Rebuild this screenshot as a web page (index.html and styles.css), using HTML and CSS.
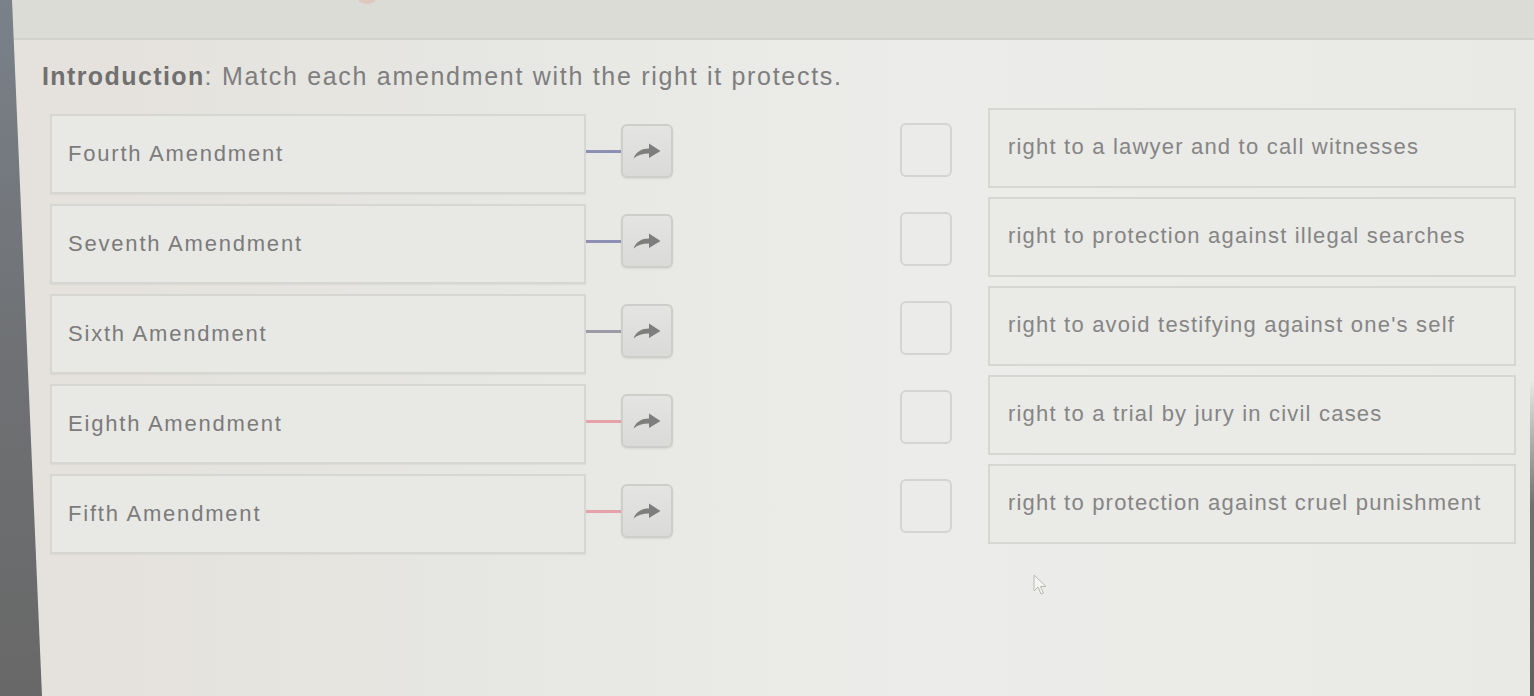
FILE: index.html
```html
<!DOCTYPE html>
<html lang="en">
<head>
  <meta charset="UTF-8">
  <meta name="viewport" content="width=device-width, initial-scale=1.0">
  <title>Amendments Matching</title>
  <link rel="stylesheet" href="styles.css">
</head>
<body>
  <div class="bezel"></div>
  <div class="bezel-right"></div>
  <div class="screen">
    <div class="topbar"><span class="dot"></span></div>
    <h1 class="intro"><b>Introduction</b>: Match each amendment with the right it protects.</h1>

    <div class="board">
      <div class="terms">
        <div class="pair">
          <div class="term">Fourth Amendment</div>
          <div class="link blue"></div>
          <button class="send">
            <svg viewBox="0 0 30 18" width="30" height="18"><path d="M1.5 16.5 C4 9.5 10 6.5 17 6.5 L17 1.5 L28.5 9 L17 16 L17 11.5 C10.5 11.5 5.5 13 1.5 16.5 Z"/></svg>
          </button>
        </div>
        <div class="pair">
          <div class="term">Seventh Amendment</div>
          <div class="link blue"></div>
          <button class="send">
            <svg viewBox="0 0 30 18" width="30" height="18"><path d="M1.5 16.5 C4 9.5 10 6.5 17 6.5 L17 1.5 L28.5 9 L17 16 L17 11.5 C10.5 11.5 5.5 13 1.5 16.5 Z"/></svg>
          </button>
        </div>
        <div class="pair">
          <div class="term">Sixth Amendment</div>
          <div class="link grey"></div>
          <button class="send">
            <svg viewBox="0 0 30 18" width="30" height="18"><path d="M1.5 16.5 C4 9.5 10 6.5 17 6.5 L17 1.5 L28.5 9 L17 16 L17 11.5 C10.5 11.5 5.5 13 1.5 16.5 Z"/></svg>
          </button>
        </div>
        <div class="pair">
          <div class="term">Eighth Amendment</div>
          <div class="link red"></div>
          <button class="send">
            <svg viewBox="0 0 30 18" width="30" height="18"><path d="M1.5 16.5 C4 9.5 10 6.5 17 6.5 L17 1.5 L28.5 9 L17 16 L17 11.5 C10.5 11.5 5.5 13 1.5 16.5 Z"/></svg>
          </button>
        </div>
        <div class="pair">
          <div class="term">Fifth Amendment</div>
          <div class="link red"></div>
          <button class="send">
            <svg viewBox="0 0 30 18" width="30" height="18"><path d="M1.5 16.5 C4 9.5 10 6.5 17 6.5 L17 1.5 L28.5 9 L17 16 L17 11.5 C10.5 11.5 5.5 13 1.5 16.5 Z"/></svg>
          </button>
        </div>
      </div>

      <div class="answers">
        <div class="slot">
          <div class="check"></div>
          <div class="answer">right to a lawyer and to call witnesses</div>
        </div>
        <div class="slot">
          <div class="check"></div>
          <div class="answer">right to protection against illegal searches</div>
        </div>
        <div class="slot">
          <div class="check"></div>
          <div class="answer">right to avoid testifying against one's self</div>
        </div>
        <div class="slot">
          <div class="check"></div>
          <div class="answer">right to a trial by jury in civil cases</div>
        </div>
        <div class="slot">
          <div class="check"></div>
          <div class="answer">right to protection against cruel punishment</div>
        </div>
      </div>
    </div>
  </div>

  <!-- mouse pointer -->
  <svg class="pointer" viewBox="0 0 14 22" width="14" height="22">
    <path d="M1 1 L1 17 L5 13 L8 20 L10.5 19 L7.5 12.5 L13 12.5 Z" fill="#f4f4f2" stroke="#b9b9b6" stroke-width="1"/>
  </svg>
</body>
</html>
```

FILE: styles.css
```css
body {
  margin: 0;
  height: 696px;
  overflow: hidden;
  font-family: "Liberation Sans", Arial, sans-serif;
  background: linear-gradient(90deg, #e5e1dc 0%, #e6e6e2 30%, #ececea 60%, #e9e9e6 100%);
  position: relative;
}
.bezel {
  position: absolute;
  left: 0;
  top: 0;
  width: 46px;
  height: 100%;
  background: linear-gradient(180deg, #7a8189 0%, #6f7174 50%, #686868 100%);
  clip-path: polygon(0 0, 12px 0, 42px 100%, 0 100%);
  z-index: 2;
}
.bezel-right {
  position: absolute;
  right: 0;
  top: 380px;
  width: 4px;
  bottom: 0;
  background: linear-gradient(180deg, rgba(110, 110, 110, 0) 0%, #707070 40%, #606060 100%);
  z-index: 2;
}
.screen {
  display: flex;
  flex-direction: column;
}
.topbar {
  height: 38px;
  background: #dcdcd7;
  border-bottom: 2px solid #d2d3cd;
  position: relative;
}
.dot {
  position: absolute;
  left: 358px;
  top: -8px;
  width: 18px;
  height: 12px;
  border-radius: 50%;
  background: #e2b2a6;
  opacity: 0.5;
}
.intro {
  margin: 21px 0 0 42px;
  font-size: 25px;
  line-height: 30px;
  font-weight: normal;
  letter-spacing: 1.7px;
  color: #7e7e7e;
}
.intro b {
  color: #707070;
  letter-spacing: 1.4px;
}

.board {
  display: flex;
  margin-top: 23px;
}
.terms {
  display: flex;
  flex-direction: column;
  gap: 10px;
  padding-left: 50px;
  width: 850px;
}
.pair {
  display: flex;
  align-items: center;
  height: 80px;
}
.term {
  box-sizing: border-box;
  width: 536px;
  height: 80px;
  border: 2px solid #d6d6d3;
  background: #e8e8e5;
  padding-left: 16px;
  display: flex;
  align-items: center;
  font-size: 22px;
  letter-spacing: 1.8px;
  color: #7b7b7b;
  box-shadow: 0 1px 1px rgba(0, 0, 0, 0.04);
}
.link {
  width: 35px;
  height: 3px;
  margin-top: -6px;
}
.link.blue { background: #8e90b3; }
.link.grey { background: #9c9ca6; }
.link.red { background: #e5a2a8; }
.send {
  box-sizing: border-box;
  width: 52px;
  height: 54px;
  margin-top: -6px;
  border: 2px solid #cdcdca;
  border-radius: 6px;
  background: linear-gradient(180deg, #e4e4e2 0%, #dadad8 100%);
  box-shadow: 0 1px 2px rgba(0, 0, 0, 0.08);
  display: flex;
  align-items: center;
  justify-content: center;
  padding: 0;
}
.send svg {
  fill: #7e7e7e;
  margin-top: -1px;
}

.answers {
  display: flex;
  flex-direction: column;
  gap: 9px;
  margin-top: -6px;
}
.slot {
  display: flex;
  align-items: center;
  height: 80px;
}
.check {
  box-sizing: border-box;
  width: 52px;
  height: 54px;
  margin-top: 4px;
  border: 2px solid #d4d4d2;
  border-radius: 6px;
  background: #ebebe9;
}
.answer {
  box-sizing: border-box;
  margin-left: 36px;
  width: 528px;
  height: 80px;
  border: 2px solid #d6d6d3;
  background: #eaeae7;
  padding: 0 0 2px 18px;
  display: flex;
  align-items: center;
  font-size: 22px;
  letter-spacing: 1.2px;
  color: #858585;
}

.pointer {
  position: absolute;
  left: 1033px;
  top: 574px;
}
```
